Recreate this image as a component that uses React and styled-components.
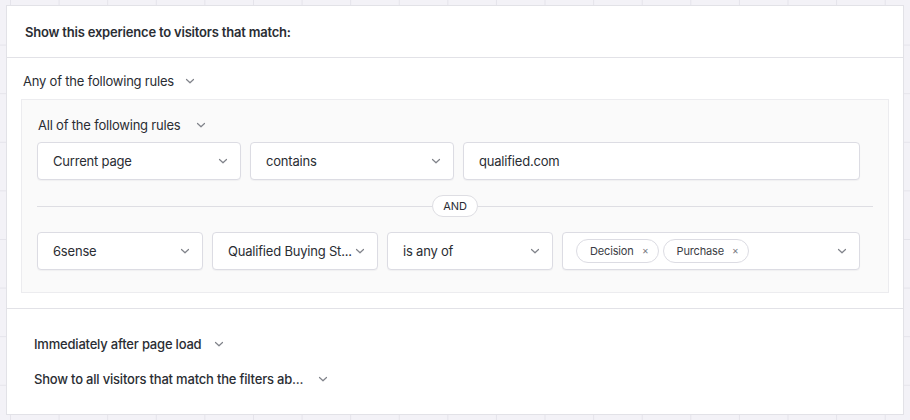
import styled, { createGlobalStyle } from "styled-components";

const GlobalStyle = createGlobalStyle`
  body {
    margin: 0;
    font-family: Inter, "Noto Sans", "Liberation Sans", sans-serif;
    letter-spacing: -0.2px;
    color: #2a2d33;
    background-color: #f3f2f7;
    background-image:
      linear-gradient(to right, #e5e4eb 1px, transparent 1px),
      linear-gradient(to bottom, #e5e4eb 1px, transparent 1px);
    background-size: 48.6px 48.6px;
    background-position: 10px -4px;
    min-height: 420px;
  }
`;

const Panel = styled.div`
  margin: 5px 0 0 6px;
  width: 896px;
  background: #fff;
  border: 1px solid #e2e2e7;
`;

const Header = styled.div`
  height: 51px;
  display: flex;
  align-items: center;
  padding-left: 18px;
  font-size: 13px;
  font-weight: 600;
  border-bottom: 1px solid #e2e2e7;
`;

const Section = styled.div`
  padding: ${(p) => p.$pad};
  border-bottom: ${(p) => (p.$last ? "none" : "1px solid #e2e2e7")};
  display: flex;
  flex-direction: column;
  gap: ${(p) => p.$gap || 0}px;
`;

const RuleLabel = styled.div`
  height: 18px;
  display: flex;
  align-items: center;
  gap: ${(p) => p.$gap || 10}px;
  padding-left: ${(p) => p.$indent || 0}px;
  font-size: 13px;
  font-weight: ${(p) => (p.$strong ? 500 : 400)};
  margin-bottom: ${(p) => p.$after || 0}px;
`;

const RuleBox = styled.div`
  background: #fafafa;
  border: 1px solid #ececef;
  padding: 16px 15px 22px 15px;
`;

const Row = styled.div`
  display: flex;
  gap: 9px;
  margin-right: 13px;
`;

const Field = styled.div`
  box-sizing: border-box;
  width: ${(p) => (p.$w ? `${p.$w}px` : "auto")};
  flex: ${(p) => (p.$w ? "none" : "1")};
  height: 38px;
  display: flex;
  align-items: center;
  justify-content: space-between;
  padding: 0 12px 0 15px;
  background: #fff;
  border: 1px solid #dcdce3;
  border-radius: 4px;
  box-shadow: 0 1px 1px rgba(20, 20, 40, 0.04);
  font-size: 13px;
  color: #2a2d33;
  white-space: nowrap;
`;

const Tags = styled.div`
  display: flex;
  gap: 4px;
  margin-left: -2px;
`;

const Tag = styled.span`
  height: 24px;
  box-sizing: border-box;
  display: inline-flex;
  align-items: center;
  gap: 8px;
  padding: 0 9px 0 13px;
  border: 1px solid #dcdce3;
  border-radius: 12px;
  font-size: 11px;
  letter-spacing: -0.15px;
  color: #3a3d44;
  background: #fff;
`;

const Close = styled.span`
  font-size: 8px;
  color: #777a80;
`;

const Divider = styled.div`
  height: 52px;
  display: flex;
  align-items: center;
  &::before,
  &::after {
    content: "";
    flex: 1;
    height: 1px;
    background: #dedee3;
  }
`;

const Pill = styled.span`
  height: 22px;
  box-sizing: border-box;
  padding: 0 10px;
  display: flex;
  align-items: center;
  border: 1px solid #dedee3;
  border-radius: 11px;
  background: #fff;
  font-size: 11px;
  letter-spacing: -0.1px;
  color: #2a2d33;
`;

const Chevron = () => (
  <svg width="10" height="10" viewBox="0 0 10 10" fill="none">
    <polyline
      points="1.5,3.5 5,6.8 8.5,3.5"
      stroke="#80838a"
      strokeWidth="1.2"
      strokeLinecap="round"
      strokeLinejoin="round"
    />
  </svg>
);

function Select({ w, children }) {
  return (
    <Field $w={w}>
      <span>{children}</span>
      <Chevron />
    </Field>
  );
}

export default function App() {
  return (
    <>
      <GlobalStyle />
      <Panel>
        <Header>Show this experience to visitors that match:</Header>
        <Section $pad="14px 14px 15px 14px">
          <RuleLabel $indent={2} $after={9} $gap={11}>
            Any of the following rules <Chevron />
          </RuleLabel>
          <RuleBox>
            <RuleLabel $indent={1} $after={8} $gap={15}>
              All of the following rules <Chevron />
            </RuleLabel>
            <Row>
              <Select w={204}>Current page</Select>
              <Select w={204}>contains</Select>
              <Field>qualified.com</Field>
            </Row>
            <Divider>
              <Pill>AND</Pill>
            </Divider>
            <Row>
              <Select w={166}>6sense</Select>
              <Select w={166}>Qualified Buying St...</Select>
              <Select w={166}>is any of</Select>
              <Field>
                <Tags>
                  <Tag>
                    Decision<Close>✕</Close>
                  </Tag>
                  <Tag>
                    Purchase<Close>✕</Close>
                  </Tag>
                </Tags>
                <Chevron />
              </Field>
            </Row>
          </RuleBox>
        </Section>
        <Section $pad="26px 27px 26px 27px" $gap={17} $last>
          <RuleLabel $strong $gap={13}>
            Immediately after page load <Chevron />
          </RuleLabel>
          <RuleLabel $strong $gap={15}>
            Show to all visitors that match the filters ab... <Chevron />
          </RuleLabel>
        </Section>
      </Panel>
    </>
  );
}
